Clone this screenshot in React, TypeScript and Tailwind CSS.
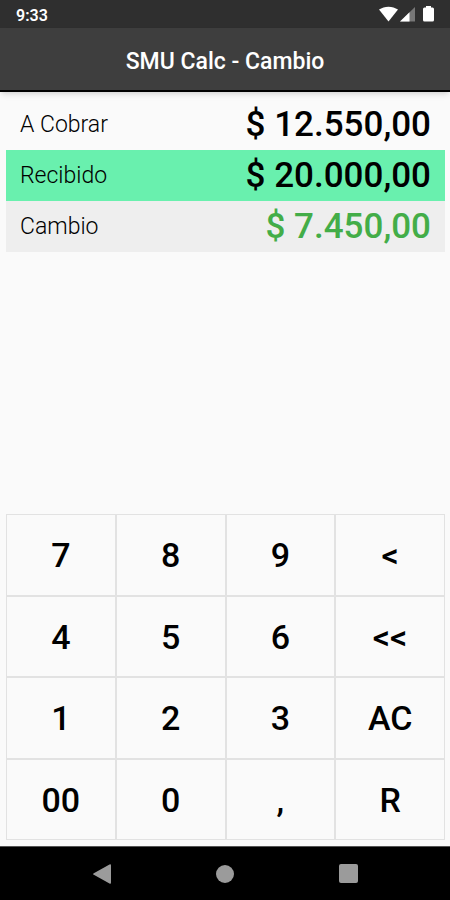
import { useState } from "react";

type Field = "total" | "received";

const keys = ["7", "8", "9", "<", "4", "5", "6", "<<", "1", "2", "3", "AC", "00", "0", ",", "R"];

const keyNames: Record<string, string> = {
  "<": "Borrar",
  "<<": "Borrar todo",
  "AC": "Reiniciar",
  "R": "Recibido",
};

function toNumber(s: string) {
  return parseFloat(s.replace(",", ".")) || 0;
}

function money(n: number) {
  const [int, dec] = Math.abs(n).toFixed(2).split(".");
  const sign = n < 0 ? "-" : "";
  return `$ ${sign}${int.replace(/\B(?=(\d{3})+$)/g, ".")},${dec}`;
}

function StatusBar() {
  return (
    <div className="flex h-7 items-center justify-between bg-[#2f2f2f] pl-4 pr-4 text-white">
      <span className="pt-1 text-base font-semibold">9:33</span>
      <div className="flex items-center">
        <svg width="19" height="16" viewBox="0 0 19 16" fill="currentColor">
          <path d="M0 3.6C5.400 -.3 13.600 -.3 19 3.600L9.500 15.500z" />
        </svg>
        <svg width="15" height="16" viewBox="0 0 15 16" className="ml-0.5">
          <path d="M0 15.500L15 1v14.500z" fill="#777" />
          <path d="M0 15.500L9.500 6.300v9.200z" fill="#fff" />
        </svg>
        <svg width="11" height="16" viewBox="0 0 11 16" fill="currentColor" className="ml-2">
          <path d="M3 0h5v1.500h1.500q1.500 0 1.500 1.500v11q0 1.500-1.500 1.500h-8Q0 15.500 0 14V3q0-1.500 1.500-1.500H3z" />
        </svg>
      </div>
    </div>
  );
}

export default function App() {
  const [values, setValues] = useState<Record<Field, string>>({ total: "12550", received: "20000" });
  const [active, setActive] = useState<Field>("received");

  const change = toNumber(values.received) - toNumber(values.total);

  function press(key: string) {
    const cur = values[active];
    if (key === "AC") {
      setValues({ total: "", received: "" });
      setActive("total");
    } else if (key === "R") {
      setActive(active === "total" ? "received" : "total");
    } else if (key === "<") {
      setValues({ ...values, [active]: cur.slice(0, -1) });
    } else if (key === "<<") {
      setValues({ ...values, [active]: "" });
    } else if (key !== "," || !cur.includes(",")) {
      setValues({ ...values, [active]: cur + key });
    }
  }

  const rows: { id: Field; label: string }[] = [
    { id: "total", label: "A Cobrar" },
    { id: "received", label: "Recibido" },
  ];

  return (
    <div className="flex min-h-screen flex-col bg-[#fafafa] font-['Roboto',sans-serif] text-black">
      <StatusBar />
      <header className="flex h-16 items-center justify-center border-b-2 border-black bg-[#3e3e3e] pt-1.5 shadow-md">
        <h1 className="text-[23px] font-medium text-white">SMU Calc - Cambio</h1>
      </header>

      <main className="flex grow flex-col justify-between pt-[7px] pr-[5px] pb-1.5 pl-1.5">
        <div>
          {rows.map((r) => (
            <button
              key={r.id}
              onClick={() => setActive(r.id)}
              className={`flex h-[51px] w-full items-center justify-between pt-0.5 pr-3.5 pl-3.5 ${
                active === r.id ? "bg-[#69f0ae]" : ""
              }`}
            >
              <span className="text-[23px] font-light">{r.label}</span>
              <span className="text-[35px] font-medium">{money(toNumber(values[r.id]))}</span>
            </button>
          ))}
          <div className="flex h-[51px] items-center justify-between bg-[#eeeeee] pt-0.5 pr-3.5 pl-3.5">
            <span className="text-[23px] font-light">Cambio</span>
            <output className="text-[35px] font-medium text-[#43ad48]">{money(change)}</output>
          </div>
        </div>

        <div className="grid h-[326px] grid-cols-4 grid-rows-4">
          {keys.map((k) => (
            <button
              key={k}
              aria-label={keyNames[k]}
              onClick={() => press(k)}
              className="border border-[#e2e2e2] pt-0.5 text-[34px] font-medium active:bg-gray-200"
            >
              {k}
            </button>
          ))}
        </div>
      </main>

      <nav className="flex h-[54px] items-center justify-center gap-[105px] border-t border-[#555] bg-black">
        <button aria-label="Atrás">
          <svg width="18" height="20" viewBox="0 0 18 20" fill="#9b9b9b">
            <path d="M16.500 .5q1.500-.8 1.500 1v17q0 1.800-1.500 1L.8 10.800q-1.500-.8 0-1.600z" />
          </svg>
        </button>
        <button aria-label="Inicio" className="size-[18px] rounded-full bg-[#9b9b9b]" />
        <button aria-label="Recientes" className="size-[19px] rounded-xs bg-[#9b9b9b]" />
      </nav>
    </div>
  );
}
